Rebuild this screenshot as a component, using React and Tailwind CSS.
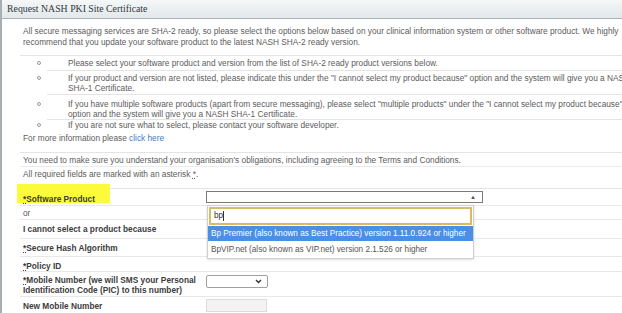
import React from "react";

// Bullets shown above the form
const NOTES = [
  { pad: "pt-[2px] pb-[2px]", lines: ["Please select your software product and version from the list of SHA-2 ready product versions below."] },
  {
    pad: "pt-[2px] pb-[1px]",
    lines: [
      'If your product and version are not listed, please indicate this under the "I cannot select my product because" option and the system will give you a NASH',
      "SHA-1 Certificate.",
    ],
  },
  {
    pad: "pt-[4px] pb-[0px]",
    lines: [
      'If you have multiple software products (apart from secure messaging), please select "multiple products" under the "I cannot select my product because"',
      "option and the system will give you a NASH SHA-1 Certificate.",
    ],
  },
  { pad: "pt-[0px] pb-[0px]", lines: ["If you are not sure what to select, please contact your software developer."] },
];

const OPTIONS = [
  "Bp Premier (also known as Best Practice) version 1.11.0.924 or higher",
  "BpVIP.net (also known as VIP.net) version 2.1.526 or higher",
];

function Asterisk() {
  return <span className="underline decoration-dotted">*</span>;
}

function Row({ label, h, children, bold = true, align = "items-center", labelPad = "" }) {
  return (
    <div className={`flex border-b border-[#e8e8e8] ${h}`}>
      <div className={`w-[186px] shrink-0 pl-[3px] flex relative ${align} ${labelPad} ${bold ? "font-bold text-[#3c3c3c]" : "text-[#555]"}`}>
        {label}
      </div>
      <div className={`flex-1 flex relative ${align}`}>{children}</div>
    </div>
  );
}

export default function App() {
  return (
    <div className="w-[622px] h-[313px] overflow-hidden bg-white border-l-2 border-[#a7afb3] font-['Liberation_Sans',Arial,sans-serif] text-[8.3px] leading-[10px] text-[#5c5c5c]">
      <div className="h-[19px] flex items-center pl-[5px] bg-gradient-to-b from-[#f5f7f8] to-[#e3e8ea] border-b border-[#a9b3b8] font-['Liberation_Serif',serif] text-[9.8px] text-[#2f3a40]">
        Request NASH PKI Site Certificate
      </div>

      <div className="pl-[18px] whitespace-nowrap">
        <div className="pt-[7px] pb-[7px] px-[3px] leading-[11px] border-b border-[#e4e4e4]">
          <div>
            All secure messaging services are SHA-2 ready, so please select the options below based on your clinical information system or other software product. We highly
          </div>
          <div>recommend that you update your software product to the latest NASH SHA-2 ready version.</div>
        </div>

        <ul>
          {NOTES.map((note, i) => (
            <li
              key={i}
              className={`flex ml-[27px] ${note.pad} ${i < NOTES.length - 1 ? "border-b border-[#e4e4e4]" : ""}`}
            >
              <span className="-ml-[10px] w-[31px] shrink-0 h-[10px] flex items-center">
                <span className="w-[4px] h-[4px] rounded-full border border-[#9a9a9a]" />
              </span>
              <div>
                {note.lines.map((l) => (
                  <div key={l}>{l}</div>
                ))}
              </div>
            </li>
          ))}
        </ul>

        <div className="px-[3px] pt-[3px] pb-[9px] border-b border-[#e4e4e4]">
          For more information please <span className="text-[#3f7cc4]">click here</span>
        </div>
        <div className="px-[3px] h-[14px] flex items-center border-b border-[#ececec]">
          You need to make sure you understand your organisation's obligations, including agreeing to the Terms and Conditions.
        </div>
        <div className="px-[3px] h-[22px] pt-[2px] border-b border-[#e4e4e4]">
          All required fields are marked with an asterisk <Asterisk />.
        </div>

        <div>
          <Row
            h="h-[17px]"
            labelPad="pt-[3px]"
            label={
              <>
                <span className="absolute -left-[3px] -top-[5px] w-[93px] h-[19px] bg-[#fbfb3c]" />
                <span className="relative">
                  <Asterisk />Software Product
                </span>
              </>
            }
          >
            <div className="w-[277px] h-[12px] -mt-[1px] border border-[#7a7a7a] bg-white flex justify-end items-center pr-[6px] text-[6px] text-[#555]">
              ▲
            </div>
            <div className="absolute left-[1px] top-[16px] w-[267px] bg-white border border-[#cfcfcf] shadow-sm z-10 text-[8.2px]">
              <div className="m-[1px] h-[18px] border-2 border-[#d8bd62] flex items-center pl-[3px] text-[#333]">
                bp<span className="w-px h-[10px] bg-[#333]" />
              </div>
              <div className="h-[15px] mt-[1px] flex items-center pl-[3px] bg-[#4a8fe3] text-white">{OPTIONS[0]}</div>
              <div className="h-[17px] flex items-center pl-[3px] text-[#555]">{OPTIONS[1]}</div>
            </div>
          </Row>
          <Row h="h-[14px]" bold={false} label="or" />
          <Row h="h-[19px]" label="I cannot select a product because" />
          <Row h="h-[18px]" label={<span><Asterisk />Secure Hash Algorithm</span>} />
          <Row h="h-[15px]" labelPad="pt-[3px]" label={<span><Asterisk />Policy ID</span>} />
          <Row
            h="h-[25px]"
            labelPad="pt-[2px]"
            label={
              <span>
                <Asterisk />Mobile Number (we will SMS your Personal<br />Identification Code (PIC) to this number)
              </span>
            }
          >
            <div className="w-[62px] h-[13px] -mt-[6px] border border-[#a0a0a0] rounded-[2px] bg-white flex justify-end items-center pr-[5px]">
              <svg width="7" height="5" viewBox="0 0 7 5" fill="none" stroke="#333" strokeWidth="1.4">
                <path d="M1 1l2.5 2.5L6 1" />
              </svg>
            </div>
          </Row>
          <Row h="h-[20px]" align="items-start" labelPad="pt-[4px]" label="New Mobile Number">
            <div className="w-[61px] h-[13px] mt-[2px] border border-[#dcdcdc] bg-[#f3f3f3]" />
          </Row>
        </div>
      </div>
    </div>
  );
}
